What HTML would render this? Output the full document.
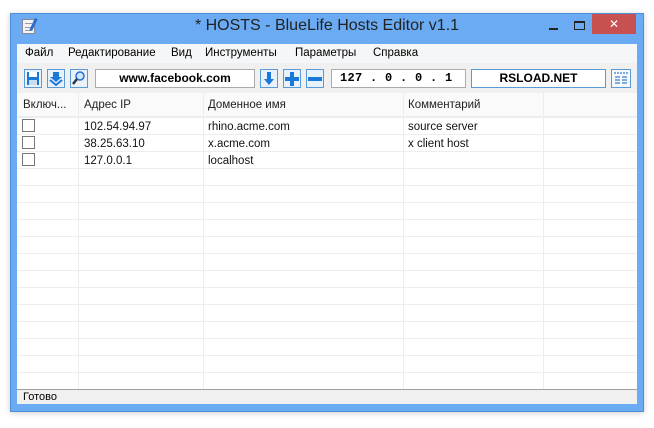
<!DOCTYPE html>
<html><head><meta charset="utf-8"><style>
*{margin:0;padding:0;box-sizing:border-box}
body{width:654px;height:428px;background:#fff;position:relative;overflow:hidden;font-family:"Liberation Sans","DejaVu Sans",sans-serif;font-size:12px;color:#000}
.abs{position:absolute}
.win{left:10px;top:13px;width:634px;height:399px;background:#6aabf3;border:1px solid #4f8fd8;box-shadow:0 1px 6px rgba(0,0,0,.2)}
.title{left:0;top:17px;width:654px;text-align:center;font-size:16px;color:#222}
.close{left:592px;top:14px;width:44px;height:20px;background:#c75050;color:#fff;text-align:center;font-size:12px;line-height:20px;font-weight:bold}
.client{left:17px;top:44px;width:620px;height:360px;background:#fff}
.menu{left:17px;top:44px;width:620px;height:19px;background:#f5f6f7;font-size:11.5px}
.menu span{position:absolute;top:3px}
.tb{left:17px;top:63px;width:620px;height:30px;background:#f0f0f0}
.btn{position:absolute;top:69px;width:18px;height:19px;border:1px solid #5b9bd5;background:#e9f1fa}
.box{position:absolute;top:69px;height:19px;background:#fff;border:1px solid #aaa;font-weight:bold;font-size:12px;text-align:center;line-height:17px}
.hdr{left:17px;top:93px;width:620px;height:24px;background:#fafafa;border-bottom:1px solid #e8eef5}
.hdr span{position:absolute;top:6px;font-size:11.5px;color:#222}
.vl{position:absolute;top:93px;width:1px;height:297px;background:#ededed}
.hl{position:absolute;left:17px;width:620px;height:1px;background:#ededed}
.cell{position:absolute;font-size:11.5px;color:#111}
.cb{position:absolute;left:22px;width:13px;height:13px;border:1px solid #777;background:#fff}
.status{left:17px;top:389px;width:620px;height:15px;background:#f0f0f0;border-top:1px solid #a0a0a0;font-size:11px;padding-left:6px;line-height:14px}
</style></head><body>
<div class="abs win"></div>
<div class="abs" style="left:22px;top:19px;width:13px;height:15px;background:#f4f4f4;border:1px solid #889">
<div style="margin:3px 2px;height:1px;background:#99a"></div><div style="margin:2px 2px;height:1px;background:#99a"></div><div style="margin:2px 2px;height:1px;background:#99a"></div></div>
<div class="abs" style="left:32px;top:18px;width:3px;height:13px;background:#2a6fd0;transform:rotate(25deg)"></div>
<div class="abs title">* HOSTS - BlueLife Hosts Editor v1.1</div>
<div class="abs" style="left:549px;top:28px;width:9px;height:2px;background:#222"></div>
<div class="abs" style="left:574px;top:21px;width:11px;height:9px;border:1px solid #222;border-top-width:2px"></div>
<div class="abs close">✕</div>
<div class="abs client"></div>
<div class="abs menu"><span style="left:8px">Файл</span><span style="left:51px">Редактирование</span><span style="left:154px">Вид</span><span style="left:188px">Инструменты</span><span style="left:278px">Параметры</span><span style="left:356px">Справка</span></div>
<div class="abs tb"></div>
<div class="btn" style="left:24px"><svg width="16" height="17" viewBox="0 0 16 17"><rect x="2" y="2" width="12" height="13" fill="#1a78d8"/><rect x="4" y="2" width="8" height="5" fill="#fff"/><rect x="4" y="10" width="8" height="5" fill="#cde"/></svg></div>
<div class="btn" style="left:47px"><svg width="16" height="17" viewBox="0 0 16 17"><path d="M5 2h6v5h3l-6 5-6-5h3z" fill="#1a78d8"/><path d="M2 10l6 5 6-5" stroke="#1a78d8" stroke-width="2" fill="none"/></svg></div>
<div class="btn" style="left:70px"><svg width="16" height="17" viewBox="0 0 16 17"><circle cx="9" cy="6" r="4" fill="#cfe6ff" stroke="#2a6fd0" stroke-width="1.5"/><path d="M6 9l-4 5" stroke="#333" stroke-width="2.5"/></svg></div>
<div class="box" style="left:95px;width:160px">www.facebook.com</div>
<div class="btn" style="left:260px"><svg width="16" height="17" viewBox="0 0 16 17"><path d="M6 2h4v7h3l-5 6-5-6h3z" fill="#1a78d8"/></svg></div>
<div class="btn" style="left:283px"><svg width="16" height="17" viewBox="0 0 16 17"><path d="M6 2h4v5h5v4h-5v5h-4v-5h-5v-4h5z" fill="#1a78d8"/></svg></div>
<div class="btn" style="left:306px"><svg width="16" height="17" viewBox="0 0 16 17"><rect x="1" y="7" width="14" height="4" fill="#1a78d8"/></svg></div>
<div class="box" style="left:331px;width:135px;text-align:left;padding-left:8px;font-family:'Liberation Mono',monospace;font-size:12px;white-space:pre;overflow:hidden;letter-spacing:0.3px">127 . 0 . 0 . 1</div>
<div class="box" style="left:471px;width:135px;border-color:#5b9bd5">RSLOAD.NET</div>
<div class="btn" style="left:611px;width:20px;background:#f5f8fc"><svg width="18" height="17" viewBox="0 0 18 17"><path d="M2 3h14" stroke="#3a7fd0" stroke-width="1.3" stroke-dasharray="2 1"/><path d="M3 7h5M10 7h5M3 10h5M10 10h5M3 13h5M10 13h5" stroke="#3a7fd0" stroke-width="1.3"/></svg></div>
<div class="abs hdr"><span style="left:6px">Включ...</span><span style="left:67px">Адрес IP</span><span style="left:191px">Доменное имя</span><span style="left:391px">Комментарий</span></div>
<div class="vl" style="left:78px"></div><div class="vl" style="left:203px"></div><div class="vl" style="left:403px"></div><div class="vl" style="left:543px"></div>
<div class="hl" style="top:117px"></div><div class="hl" style="top:134px"></div><div class="hl" style="top:151px"></div><div class="hl" style="top:168px"></div><div class="hl" style="top:185px"></div><div class="hl" style="top:202px"></div><div class="hl" style="top:219px"></div><div class="hl" style="top:236px"></div><div class="hl" style="top:253px"></div><div class="hl" style="top:270px"></div><div class="hl" style="top:287px"></div><div class="hl" style="top:304px"></div><div class="hl" style="top:321px"></div><div class="hl" style="top:338px"></div><div class="hl" style="top:355px"></div><div class="hl" style="top:372px"></div>
<div class="cb" style="top:119px"></div><div class="cb" style="top:136px"></div><div class="cb" style="top:153px"></div>
<div class="cell" style="left:84px;top:121px">102.54.94.97</div>
<div class="cell" style="left:208px;top:121px">rhino.acme.com</div>
<div class="cell" style="left:408px;top:121px">source server</div>
<div class="cell" style="left:84px;top:138px">38.25.63.10</div>
<div class="cell" style="left:208px;top:138px">x.acme.com</div>
<div class="cell" style="left:408px;top:138px">x client host</div>
<div class="cell" style="left:84px;top:155px">127.0.0.1</div>
<div class="cell" style="left:208px;top:155px">localhost</div>
<div class="abs status">Готово</div>
</body></html>
